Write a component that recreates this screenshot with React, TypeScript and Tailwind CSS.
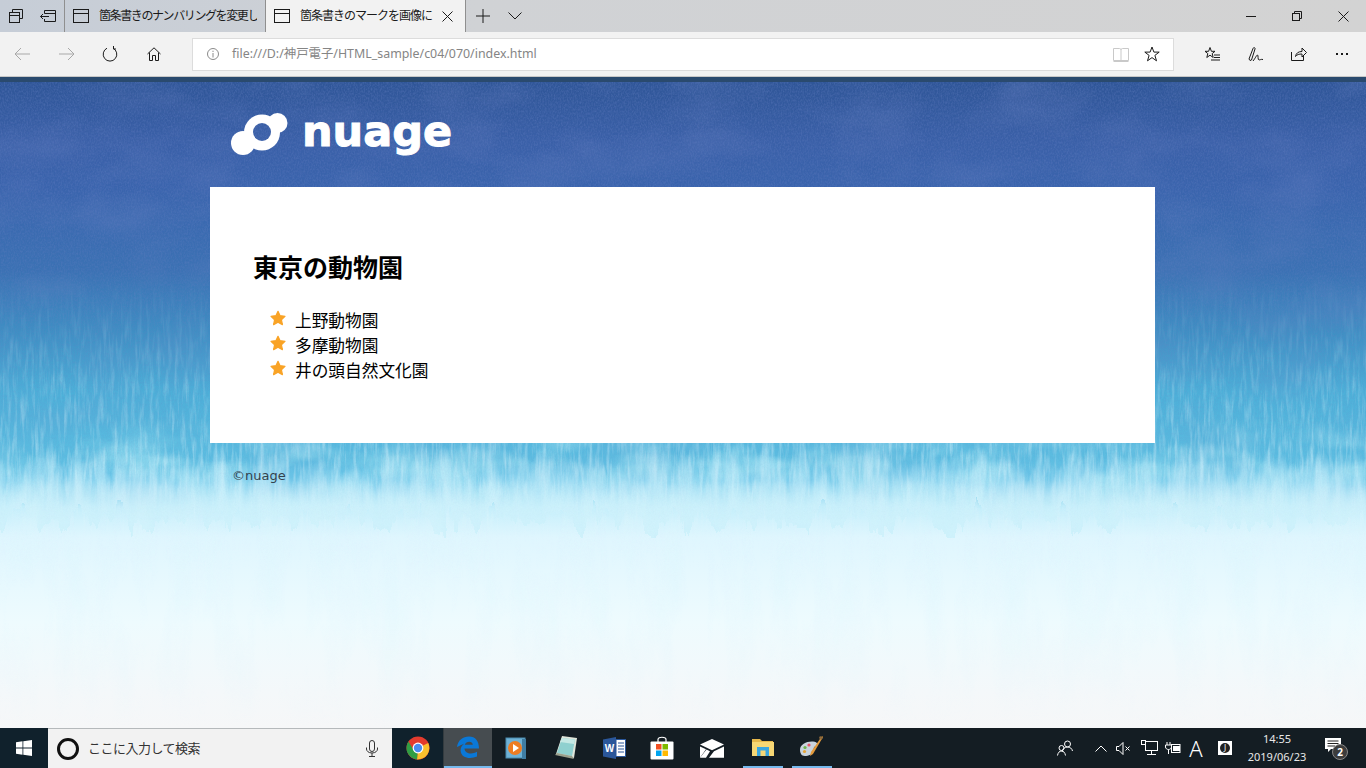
import React from "react";

const S = ({ w = 16, h = 16, vb, children, cls = "" }: { w?: number; h?: number; vb?: string; children: React.ReactNode; cls?: string }) => (
  <svg width={w} height={h} viewBox={vb ?? `0 0 ${w} ${h}`} fill="none" stroke="currentColor" strokeWidth="1" className={`block shrink-0 ${cls}`}>
    {children}
  </svg>
);

const TabIcon = () => (
  <S w={16} h={14}>
    <rect x="0.5" y="0.5" width="15" height="13" />
    <path d="M0.5 4.5H15.5" />
  </S>
);

const Star = () => (
  <svg width="16" height="16" viewBox="0 0 16 16" className="block shrink-0">
    <path d="M8 1.3 L10.1 5.7 L15 6.3 L11.4 9.7 L12.4 14.6 L8 12.2 L3.6 14.6 L4.6 9.7 L1 6.3 L5.9 5.7 Z" fill="#f9a326" stroke="#f9a326" strokeWidth="1.2" strokeLinejoin="round" />
  </svg>
);

const Background = () => (
  <svg className="absolute inset-0 w-full h-full pointer-events-none" width="1366" height="646">
    <defs>
      <filter id="grain" x="0" y="0" width="100%" height="100%">
        <feTurbulence type="fractalNoise" baseFrequency="0.7 0.45" numOctaves="2" seed="4" />
        <feColorMatrix values="0 0 0 0 0.14  0 0 0 0 0.22  0 0 0 0 0.55  1.2 0 0 0 -0.42" />
      </filter>
      <filter id="cloud" x="0" y="0" width="100%" height="100%">
        <feTurbulence type="fractalNoise" baseFrequency="0.012 0.02" numOctaves="3" seed="9" />
        <feColorMatrix values="0 0 0 0 0.16  0 0 0 0 0.24  0 0 0 0 0.56  2.2 0 0 0 -0.95" />
      </filter>
      <filter id="streak" x="0" y="0" width="100%" height="100%">
        <feTurbulence type="fractalNoise" baseFrequency="0.28 0.035" numOctaves="3" seed="12" />
        <feColorMatrix values="0 0 0 0 0.76  0 0 0 0 0.93  0 0 0 0 0.99  2.4 0 0 0 -1.05" />
      </filter>
      <filter id="blotch" x="0" y="0" width="100%" height="100%">
        <feTurbulence type="fractalNoise" baseFrequency="0.012 0.03" numOctaves="3" seed="21" />
        <feColorMatrix values="0 0 0 0 0.3  0 0 0 0 0.72  0 0 0 0 0.87  3.2 0 0 0 -1.35" />
      </filter>
      <filter id="fade" x="0" y="0" width="100%" height="100%">
        <feTurbulence type="fractalNoise" baseFrequency="0.035 0.008" numOctaves="4" seed="31" />
        <feColorMatrix values="0 0 0 0 0.72  0 0 0 0 0.92  0 0 0 0 0.99  2.4 0 0 0 -1" />
      </filter>
      <filter id="edge" x="0" y="-30%" width="100%" height="160%">
        <feTurbulence type="fractalNoise" baseFrequency="0.07 0.012" numOctaves="4" seed="7" result="n" />
        <feDisplacementMap in="SourceGraphic" in2="n" scale="70" xChannelSelector="R" yChannelSelector="G" />
      </filter>
      <linearGradient id="gEdge" x1="0" y1="0" x2="0" y2="1">
        <stop offset="0" stopColor="#c9f0fb" stopOpacity="0" />
        <stop offset="0.45" stopColor="#c9f0fb" stopOpacity="0.55" />
        <stop offset="1" stopColor="#cdf1fb" stopOpacity="1" />
      </linearGradient>
      <linearGradient id="gTop" x1="0" y1="0" x2="0" y2="1">
        <stop offset="0" stopColor="#fff" stopOpacity="1" />
        <stop offset="0.33" stopColor="#fff" stopOpacity="0.8" />
        <stop offset="0.55" stopColor="#fff" stopOpacity="0.3" />
        <stop offset="0.68" stopColor="#fff" stopOpacity="0" />
      </linearGradient>
      <linearGradient id="gStreak" x1="0" y1="0" x2="0" y2="1">
        <stop offset="0.3" stopColor="#fff" stopOpacity="0" />
        <stop offset="0.45" stopColor="#fff" stopOpacity="0.4" />
        <stop offset="0.64" stopColor="#fff" stopOpacity="0.9" />
        <stop offset="0.7" stopColor="#fff" stopOpacity="0.35" />
        <stop offset="0.76" stopColor="#fff" stopOpacity="0" />
      </linearGradient>
      <linearGradient id="gBlotch" x1="0" y1="0" x2="0" y2="1">
        <stop offset="0.52" stopColor="#fff" stopOpacity="0" />
        <stop offset="0.58" stopColor="#fff" stopOpacity="0.9" />
        <stop offset="0.63" stopColor="#fff" stopOpacity="0.9" />
        <stop offset="0.66" stopColor="#fff" stopOpacity="0" />
      </linearGradient>
      <linearGradient id="gFade" x1="0" y1="0" x2="0" y2="1">
        <stop offset="0.62" stopColor="#fff" stopOpacity="0" />
        <stop offset="0.72" stopColor="#fff" stopOpacity="0.9" />
        <stop offset="0.88" stopColor="#fff" stopOpacity="0.35" />
        <stop offset="1" stopColor="#fff" stopOpacity="0" />
      </linearGradient>
      <mask id="mTop"><rect width="1366" height="646" fill="url(#gTop)" /></mask>
      <mask id="mStreak"><rect width="1366" height="646" fill="url(#gStreak)" /></mask>
      <mask id="mBlotch"><rect width="1366" height="646" fill="url(#gBlotch)" /></mask>
      <mask id="mFade"><rect width="1366" height="646" fill="url(#gFade)" /></mask>
    </defs>
    <g mask="url(#mBlotch)"><rect width="1366" height="646" filter="url(#blotch)" opacity="0.8" /></g>
    <g mask="url(#mStreak)"><rect width="1366" height="646" filter="url(#streak)" opacity="0.55" /></g>
    <rect x="-50" y="375" width="1466" height="62" fill="url(#gEdge)" filter="url(#edge)" />
    <g mask="url(#mFade)"><rect width="1366" height="646" filter="url(#fade)" opacity="0.6" /></g>
    <g mask="url(#mTop)">
      <rect width="1366" height="646" filter="url(#cloud)" opacity="0.3" />
      <rect width="1366" height="646" filter="url(#grain)" opacity="0.6" />
    </g>
  </svg>
);

const Logo = () => (
  <svg width="58" height="44" viewBox="0 0 58 44" className="block shrink-0">
    <defs>
      <mask id="logoHole">
        <rect width="58" height="44" fill="#fff" />
        <circle cx="31" cy="19" r="9" fill="#000" />
      </mask>
    </defs>
    <g fill="#fff" mask="url(#logoHole)">
      <circle cx="12" cy="30" r="12" />
      <circle cx="31" cy="19.5" r="18" />
      <circle cx="46.500" cy="10" r="10" />
    </g>
  </svg>
);

const ChromeIcon = () => (
  <svg width="24" height="24" viewBox="0 0 24 24" className="block">
    <circle cx="12" cy="12" r="11.5" fill="#e33b2e" />
    <path d="M12 12 L22.2 7 A11.5 11.5 0 0 1 11 23.4 Z" fill="#fbc02d" />
    <path d="M12 12 L11 23.4 A11.5 11.5 0 0 1 2.4 5.6 L7 13 Z" fill="#2f9e44" />
    <circle cx="12" cy="12" r="5.4" fill="#fff" />
    <circle cx="12" cy="12" r="4.2" fill="#4a8df0" />
  </svg>
);

const EdgeIcon = () => (
  <svg width="24" height="24" viewBox="0 0 24 24" className="block">
    <path d="M1 12 C2 5 7 1.5 13 1.5 C19.5 1.5 23 6.2 23 13.5 L8.5 13.5 C8.8 18.5 15.5 20 21 16.8 L21 21.6 C14 24.6 4.8 23 4.6 15.5 C4.5 12.8 5.6 10.6 8 8.7 C6 9.8 3 10.8 1 12 Z M8.8 9.8 L16.8 9.8 C16.8 5.8 10 5.5 8.8 9.8 Z" fill="#0a78d7" fillRule="evenodd" />
  </svg>
);

const MediaIcon = () => (
  <svg width="22" height="24" viewBox="0 0 22 24" className="block">
    <rect x="1" y="2" width="19" height="20" fill="#6fb2d6" stroke="#4b8cb0" />
    <rect x="17" y="3" width="4" height="20" fill="#3f7da3" />
    <circle cx="10" cy="12" r="7" fill="#ee7d22" />
    <path d="M8 8 L14 12 L8 16 Z" fill="#fff" />
  </svg>
);

const NotesIcon = () => (
  <svg width="24" height="26" viewBox="0 0 24 26" className="block">
    <path d="M8 1 L23 3 L20 23 L2 19 Z" fill="#dfe5da" />
    <path d="M8 3 L21 4.5 L18 21 L3 18 Z" fill="#8fd0cf" />
    <path d="M3 18 L18 21 L20 24 L1 20 Z" fill="#9a9f8c" />
    <path d="M8 3 L21 4.5 L20 9 L6 7 Z" fill="#c5e8e4" />
  </svg>
);

const WordIcon = () => (
  <svg width="23" height="22" viewBox="0 0 23 22" className="block">
    <path d="M0 2.5 L13 0 L13 22 L0 19.5 Z" fill="#2b579a" />
    <rect x="13" y="2.5" width="9.5" height="17" fill="#fff" stroke="#2b579a" />
    <path d="M15 6H21M15 9H21M15 12H21M15 15H21" stroke="#2b579a" strokeWidth="1.2" />
    <text x="6.5" y="15" textAnchor="middle" fontSize="10" fontWeight="700" fill="#fff" fontFamily="Liberation Sans, sans-serif">W</text>
  </svg>
);

const StoreIcon = () => (
  <svg width="24" height="24" viewBox="0 0 24 24" className="block">
    <path d="M8 7 V3.5 C8 0.5 16 0.5 16 3.5 V7" stroke="#fff" strokeWidth="1.2" fill="none" />
    <rect x="0.5" y="5.5" width="23" height="18" rx="1" fill="#fff" />
    <rect x="6" y="8" width="5.5" height="5.5" fill="#f25022" />
    <rect x="12.5" y="8" width="5.5" height="5.5" fill="#7fba00" />
    <rect x="6" y="14.5" width="5.5" height="5.5" fill="#00a4ef" />
    <rect x="12.5" y="14.5" width="5.5" height="5.5" fill="#ffb900" />
  </svg>
);

const MailIcon = () => (
  <svg width="24" height="19" viewBox="0 0 24 19" className="block">
    <path d="M12 0 L24 5.6 L12 11.2 L0 5.6 Z" fill="#fff" />
    <path d="M0 7.4 L6 10.2 L0 18.8 Z M24 7.4 V18.8 H9 L14 12.2 Z" fill="#fff" />
    <path d="M0 18.8 L6.5 10.5 L10 12.2 L6 18.8 Z" fill="#fff" />
  </svg>
);

const FolderIcon = () => (
  <svg width="22" height="18" viewBox="0 0 22 18" className="block">
    <path d="M0 1 H8 L10 3 H21 V17 H0 Z" fill="#e7b84b" />
    <rect x="0" y="4" width="22" height="14" fill="#f7d774" />
    <rect x="5" y="9" width="12" height="9" fill="#3aa6e0" />
    <rect x="8.5" y="12.5" width="5" height="5.5" fill="#f7d774" />
  </svg>
);

const PaintIcon = () => (
  <svg width="25" height="25" viewBox="0 0 25 25" className="block">
    <path d="M1 15 C1 9 8 6 14 6.5 C19 7 20 10 16 11.5 C14 12.5 15 14 15 16 C14 20 6 22 3.5 20.5 C2 20 1 17 1 15 Z" fill="#c9d3dc" />
    <circle cx="6" cy="12.5" r="1.6" fill="#6fb34a" />
    <circle cx="10" cy="10" r="1.6" fill="#e6556a" />
    <circle cx="5.5" cy="16.5" r="1.6" fill="#e5a335" />
    <path d="M23 1 L24 2 L14 19 L11 21 L12 17 Z" fill="#e39a3b" />
    <path d="M21 1 L24 3 L22 5 L20 3 Z" fill="#8e6a3c" />
  </svg>
);

export default function App() {
  const cjk = "font-['Noto_Sans','Noto_Sans_CJK_JP',sans-serif]";
  return (
    <div className={`w-[1366px] h-[768px] overflow-hidden flex flex-col ${cjk}`}>
      {/* Tab strip */}
      <div className="h-[32px] flex shrink-0 bg-[linear-gradient(90deg,#c6cdd7_0%,#d0d2d5_35%,#d3d3d3_100%)] text-[#1a1a1a]">
        <div className="w-[65px] flex items-center pl-[9px] gap-[17px] border-r border-[#8f8f8f] shrink-0">
          <S w={14} h={14}>
            <path d="M3.5 3.5V0.5H13.5V9.5H10.5" />
            <rect x="0.5" y="3.5" width="10" height="10" />
            <path d="M0.5 6.5H10.5M3.5 3.5V1.5" />
          </S>
          <S w={16} h={12}>
            <path d="M4.5 3.5V0.5H15.5V11.5H4.5V9" />
            <path d="M4.5 3.5H15.5" />
            <path d="M0.5 6.5H9M3 4L0.5 6.5L3 9" />
          </S>
        </div>
        <div className="w-[201px] flex items-center pl-[8px] gap-[10px] border-r border-[#8f8f8f] shrink-0">
          <TabIcon />
          <span className="w-[158px] text-[12px] tracking-[-1.4px] whitespace-nowrap overflow-hidden">箇条書きのナンバリングを変更し</span>
        </div>
        <div className="w-[200px] flex items-center pl-[8px] bg-[#f2f2f2] border-r border-[#8f8f8f] shrink-0">
          <TabIcon />
          <span className="text-[12px] tracking-[-1px] whitespace-nowrap ml-[10px]">箇条書きのマークを画像に</span>
          <S w={11} h={11} cls="ml-[10px]"><path d="M0.5 0.5L10.5 10.5M10.5 0.5L0.5 10.5" /></S>
        </div>
        <div className="flex items-center pl-[10px] gap-[18px]">
          <S w={14} h={14}><path d="M7 0V14M0 7H14" /></S>
          <S w={14} h={8}><path d="M0.5 0.5L7 7L13.5 0.5" /></S>
        </div>
        <div className="ml-auto flex items-center">
          <div className="w-[46px] flex justify-center"><S w={10} h={10}><path d="M0 5.5H10" /></S></div>
          <div className="w-[46px] flex justify-center"><S w={10} h={10}><rect x="0.5" y="2.5" width="7" height="7" /><path d="M2.5 2.5V0.5H9.5V7.5H7.5" /></S></div>
          <div className="w-[46px] flex justify-center"><S w={11} h={11}><path d="M0.5 0.5L10.5 10.5M10.5 0.5L0.5 10.5" /></S></div>
        </div>
      </div>

      {/* Address bar */}
      <div className="h-[44px] flex items-center bg-[#f2f2f2] shrink-0 text-[#1a1a1a]">
        <div className="w-[192px] flex items-center pl-[14px] shrink-0">
          <S w={17} h={14} cls="text-[#a8a8a8]"><path d="M16 7H1M7 1L1 7L7 13" /></S>
          <S w={17} h={14} cls="text-[#a8a8a8] ml-[27px]"><path d="M1 7H16M10 1L16 7L10 13" /></S>
          <S w={16} h={16} cls="ml-[27px]"><path d="M11 2.2A6.8 6.8 0 1 1 5 2.2" /><path d="M11.5 0V3H14" /></S>
          <S w={14} h={14} cls="ml-[29px]"><path d="M0.5 7L7 0.8L13.5 7M2.5 5.5V13.5H5.5V8.5H8.5V13.5H11.5V5.5" /></S>
        </div>
        <div className="w-[982px] h-[33px] bg-white border border-[#dcdcdc] flex items-center shrink-0 pl-[14px] pr-[13px]">
          <S w={12} h={12} cls="text-[#8a8a8a]">
            <circle cx="6" cy="6" r="5.5" />
            <path d="M6 5V9.5M6 2.7V4" />
          </S>
          <span className="ml-[13px] text-[12.4px] text-[#858585] whitespace-nowrap">file:///D:/神戸電子/HTML_sample/c04/070/index.html</span>
          <div className="ml-auto flex items-center gap-[15px]">
            <S w={16} h={15} cls="text-[#c9c9c9]"><path d="M0.5 1.5H6.5C7.5 1.5 8 2 8 3V14.5M15.5 1.5H9.5C8.5 1.5 8 2 8 3M0.5 1.5V13.5H15.5V1.5M0.5 14.5H15.5" /></S>
            <S w={16} h={16}><path d="M8 1L9.9 6.1H15.2L10.9 9.4L12.5 14.8L8 11.6L3.5 14.8L5.1 9.4L0.8 6.1H6.1Z" /></S>
          </div>
        </div>
        <div className="flex items-center pl-[30px] shrink-0">
          <S w={16} h={16}><path d="M6 1.5L7.4 5.3H11L8.2 7.6L9.2 11.5L6 9.2L2.8 11.5L3.8 7.6L1 5.3H4.6Z" /><path d="M10 9H16M10 11.5H16M7 14H16" /></S>
          <S w={16} h={16} cls="ml-[28px]"><path d="M2 14.5L1 13L5 2.5C5.5 1 7.5 1.5 7 3L3.5 14ZM5 15C7.5 12 8.5 9 9.5 9C10.5 9 9.5 14 11 14C12 14 13 13 15 13.5" /></S>
          <S w={16} h={16} cls="ml-[27px]"><path d="M0.5 6V14.5H12.5V10M4.5 10.5C5 7 7.5 5.5 11 5.5V2L15.5 6.5L11 11V8C8 8 6 8.5 4.5 10.5Z" /></S>
          <div className="ml-[29px] flex gap-[3px]">
            <span className="w-[2px] h-[2px] bg-[#1a1a1a]" />
            <span className="w-[2px] h-[2px] bg-[#1a1a1a]" />
            <span className="w-[2px] h-[2px] bg-[#1a1a1a]" />
          </div>
        </div>
      </div>

      <div className="h-[1px] bg-[#c8c8c8] shrink-0" />
      <div className="h-[5px] bg-[#2a4a6e] shrink-0" />

      {/* Page */}
      <div className="relative flex-1 overflow-hidden bg-[linear-gradient(180deg,#2f5698_0px,#3a60a8_60px,#3a64ad_105px,#3b72b4_190px,#3f8fc4_250px,#4db0d9_310px,#5cbde1_375px,#6cc8ea_398px,#c5effb_424px,#dff6fe_455px,#eefbfe_540px,#f4f8fa_610px,#f6f7f8_646px)]">
        <Background />
        <div className="relative w-[945px] ml-[210px]">
          <div className="h-[105px] flex items-start pl-[21px] pt-[31px] gap-[13px]">
            <Logo />
            <span className="font-['DejaVu_Sans',sans-serif] font-bold text-[43px] leading-[50px] text-white mt-[-7px] [-webkit-text-stroke:1px_white]">nuage</span>
          </div>
          <div className="bg-white h-[256px] pl-[43px] pt-[61px] text-black">
            <h1 className="text-[25px] leading-[38px] font-bold">東京の動物園</h1>
            <ul className="mt-[22px] pl-[17px] flex flex-col">
              <li className="h-[25px] flex items-center text-[16.7px] leading-[25px]"><span className="-mt-[6px]"><Star /></span><span className="ml-[9px]">上野動物園</span></li>
              <li className="h-[25px] flex items-center text-[16.7px] leading-[25px]"><span className="-mt-[6px]"><Star /></span><span className="ml-[9px]">多摩動物園</span></li>
              <li className="h-[25px] flex items-center text-[16.7px] leading-[25px]"><span className="-mt-[6px]"><Star /></span><span className="ml-[9px]">井の頭自然文化園</span></li>
            </ul>
          </div>
          <p className="pl-[22px] pt-[25px] font-['DejaVu_Sans',sans-serif] text-[13px] leading-[16px] text-[#33424d]">©nuage</p>
        </div>
      </div>

      {/* Taskbar */}
      <div className="h-[40px] flex bg-[#141d23] shrink-0 text-white">
        <div className="w-[48px] flex items-center justify-center bg-[#10212c] shrink-0">
          <svg width="16" height="16" viewBox="0 0 16 16" className="block" fill="#fff">
            <path d="M0 2.2L6.5 1.3V7.5H0ZM7.3 1.2L16 0V7.5H7.3ZM0 8.4H6.5V14.7L0 13.8ZM7.3 8.4H16V16L7.3 14.8Z" />
          </svg>
        </div>
        <div className="w-[344px] flex items-center bg-[#f2f2f2] border-t border-[#b5b9bb] shrink-0 pl-[9px] text-[#333]">
          <span className="w-[22px] h-[22px] rounded-full border-[3px] border-[#111] shrink-0" />
          <span className="ml-[9px] text-[13px] tracking-[-0.5px] whitespace-nowrap">ここに入力して検索</span>
          <div className="ml-auto mr-[14px]">
            <S w={12} h={17}>
              <rect x="3.5" y="0.5" width="5" height="11" rx="2.5" />
              <path d="M0.5 7.5V9C0.5 11 2.5 13 6 13S11.5 11 11.5 9V7.5M6 13V16M3 16.5H9" />
            </S>
          </div>
        </div>
        <div className="w-[52px] flex items-center justify-center bg-[#10212c] shrink-0 border-r border-[#333b3f] pl-[1px]"><ChromeIcon /></div>
        <div className="w-[48px] flex items-center justify-center bg-[#464c50] border-b-2 border-[#76b9ed] shrink-0"><EdgeIcon /></div>
        <div className="w-[47px] flex items-center justify-center shrink-0"><MediaIcon /></div>
        <div className="w-[53px] flex items-center justify-center shrink-0"><NotesIcon /></div>
        <div className="w-[45px] flex items-center justify-center shrink-0"><WordIcon /></div>
        <div className="w-[49px] flex items-center justify-center shrink-0"><StoreIcon /></div>
        <div className="w-[52px] flex items-center justify-center shrink-0"><MailIcon /></div>
        <div className="w-[49px] shrink-0 flex justify-center">
          <div className="w-[40px] h-full flex items-center justify-center border-b-2 border-[#76b9ed]"><FolderIcon /></div>
        </div>
        <div className="w-[49px] shrink-0 flex justify-center">
          <div className="w-[40px] h-full flex items-center justify-center border-b-2 border-[#76b9ed]"><PaintIcon /></div>
        </div>

        {/* Tray */}
        <div className="flex-1 flex items-center pl-[221px]">
          <S w={16} h={16}><circle cx="10.5" cy="4" r="3" /><path d="M5 12C5.5 8.5 8 7 10.5 7S15 8.5 15.5 11" /><circle cx="4.5" cy="8" r="2.5" /><path d="M0.5 15.5C1 12.5 2.5 11 4.5 11S8 12.5 8.5 15.5" /></S>
          <S w={12} h={7} cls="ml-[22px]"><path d="M0.5 6.5L6 1L11.5 6.5" /></S>
          <S w={14} h={13} cls="ml-[9px]"><path d="M0.5 4.5H3L7 0.5V12.5L3 8.5H0.5Z" /><path d="M9.5 4.5L13.5 8.5M13.5 4.5L9.5 8.5" /></S>
          <S w={17} h={16} cls="ml-[11px]"><rect x="4.5" y="1.5" width="12" height="9" /><rect x="0.5" y="0.5" width="4" height="4" fill="#141d23" /><path d="M10.5 10.5V14.5M6 14.5H15" /></S>
          <S w={16} h={12} cls="ml-[7px]"><path d="M2 0V3M5 0V3M0.5 3H6.5V5C6.5 6.5 5 7.5 3.5 7.5S0.5 6.5 0.5 5ZM3.5 7.5V12" /><rect x="6.5" y="2.5" width="8.5" height="8" /><rect x="8" y="4" width="7" height="5" fill="#fff" stroke="none" /></S>
          <span className="ml-[8px] w-[14px] text-center font-['Noto_Sans',sans-serif] font-light text-[22px] leading-none">A</span>
          <div className="ml-[15px] w-[14px] h-[14px] bg-white flex items-center justify-center shrink-0">
            <span className="w-[10px] h-[10px] rounded-full bg-[#222] text-white text-[8px] leading-[10px] text-center">J</span>
          </div>
          <div className="ml-[5px] w-[80px] flex flex-col items-center text-[11px] leading-[18px] text-[#e8e8e8] whitespace-nowrap shrink-0">
            <span>14:55</span>
            <span>2019/06/23</span>
          </div>
          <div className="ml-[8px] relative w-[24px] h-[24px] shrink-0">
            <svg width="16" height="14" viewBox="0 0 16 14" className="block mt-[2px]">
              <path d="M0 0H16V11H6L3 14V11H0Z" fill="#fff" />
              <path d="M2.5 3H13.5M2.5 5.5H13.5M2.5 8H10" stroke="#222" />
            </svg>
            <span className="absolute left-[7px] top-[8px] w-[16px] h-[16px] rounded-full bg-[#3c3c3c] border border-[#888] text-[10px] leading-[14px] font-bold text-center text-white">2</span>
          </div>
        </div>
      </div>
    </div>
  );
}
